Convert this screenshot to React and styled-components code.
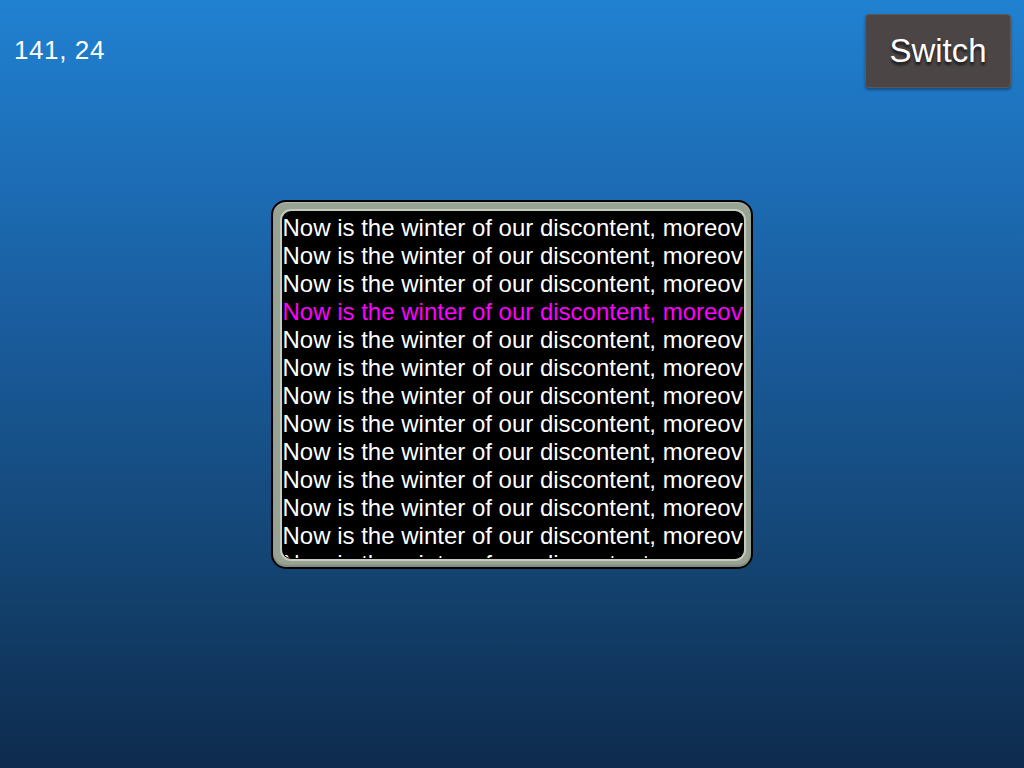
import React from "react";
import styled, { createGlobalStyle } from "styled-components";

const Global = createGlobalStyle`
  html, body { margin: 0; padding: 0; }
  body {
    font-family: "Liberation Sans", Arial, sans-serif;
    background: #0f2c4f;
  }
`;

const Page = styled.div`
  width: 100vw;
  height: 100vh;
  display: grid;
  grid-template-areas: "stack";
  background: linear-gradient(to bottom, #2081d1 0%, #1a5ea0 40%, #144777 70%, #0e2b4d 100%);
  overflow: hidden;
`;

const TopBar = styled.div`
  grid-area: stack;
  align-self: start;
  display: flex;
  justify-content: space-between;
  align-items: flex-start;
  padding: 14px 13px 0 14px;
`;

const Coords = styled.div`
  color: #fff;
  font-size: 26px;
  letter-spacing: 0.6px;
  line-height: 30px;
  margin-top: 21px;
`;

const SwitchButton = styled.button`
  width: 146px;
  height: 74px;
  background: #4b4645;
  border: 1px solid #5d5856;
  border-radius: 4px;
  box-shadow: 0 2px 3px rgba(0, 0, 0, 0.35);
  color: #fff;
  font-family: "Liberation Sans", Arial, sans-serif;
  font-size: 33px;
  text-shadow: 0 3px 3px rgba(0, 0, 0, 0.7);
  padding: 0;
  cursor: pointer;
`;

const Center = styled.div`
  grid-area: stack;
  display: flex;
  align-items: center;
  justify-content: center;
`;

const Bezel = styled.div`
  width: 482px;
  height: 369px;
  box-sizing: border-box;
  border: 2px solid #000;
  border-radius: 15px;
  background: #98a394;
  padding: 10px 8px 9px 10px;
  display: flex;
  margin-right: 1px;
  box-shadow: inset 0 -2px 2px #7e8a7b, inset 0 1px 1px #b3bcae;
`;

const Screen = styled.div`
  flex: 1;
  background: #000;
  border-radius: 8px;
  box-shadow: 0 0 0 1px #000, 0 0 0 3px #c3ccbf;
  overflow: hidden;
  padding-top: 2px;
`;

const Line = styled.div`
  color: ${(p) => (p.$highlight ? "#ff00ff" : "#fff")};
  font-size: 24px;
  line-height: 28px;
  white-space: nowrap;
  overflow: hidden;
`;

const TEXT = "Now is the winter of our discontent, moreover";

export default function App() {
  const lines = Array.from({ length: 13 }, (_, i) => i);
  return (
    <>
      <Global />
      <Page>
        <Center>
          <Bezel>
            <Screen>
              {lines.map((i) => (
                <Line key={i} $highlight={i === 3}>
                  {TEXT}
                </Line>
              ))}
            </Screen>
          </Bezel>
        </Center>
        <TopBar>
          <Coords>141, 24</Coords>
          <SwitchButton>Switch</SwitchButton>
        </TopBar>
      </Page>
    </>
  );
}
